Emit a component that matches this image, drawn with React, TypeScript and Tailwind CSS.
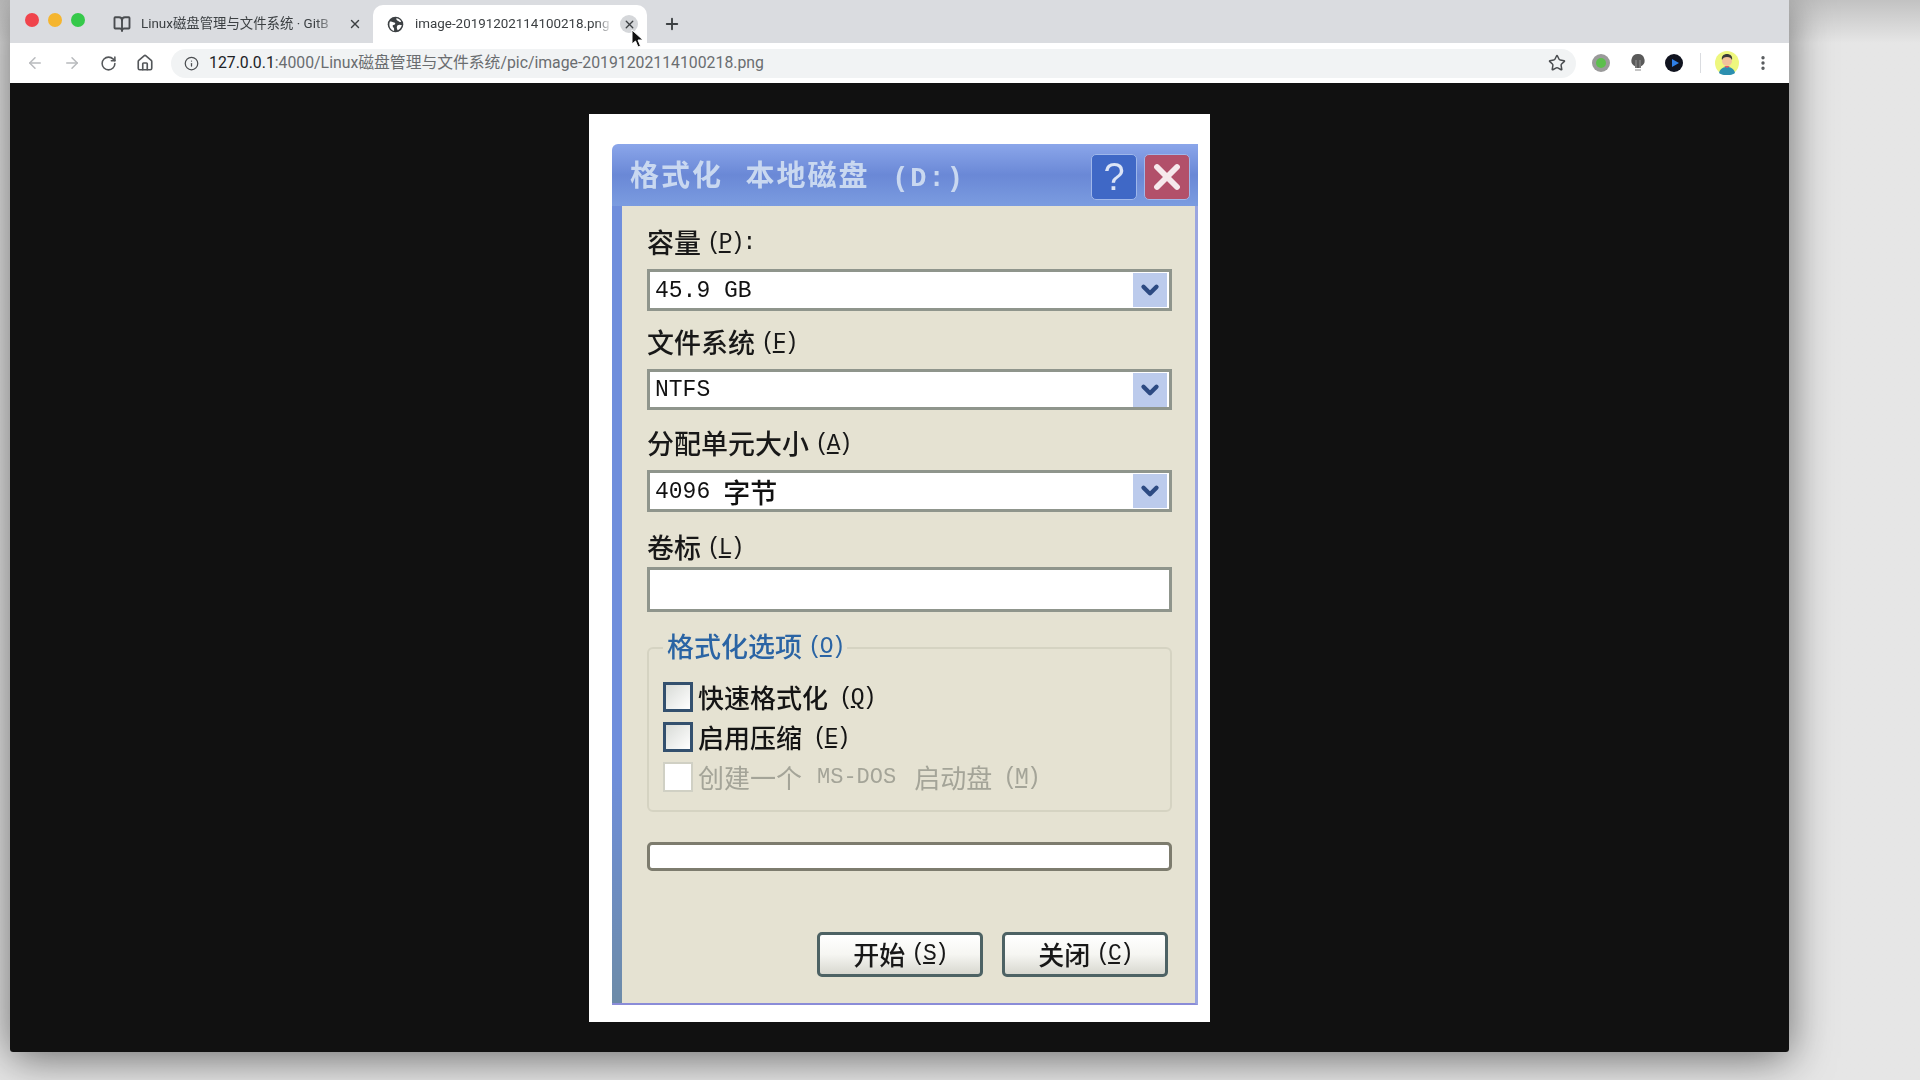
import type { ReactNode } from 'react';
import { ArrowLeft, ArrowRight, BookOpen, ChevronDown, Home, Info, MoreVertical, Plus, RotateCw, Star, X } from 'lucide-react';

const cjk = "font-['Noto_Sans_CJK_SC',sans-serif]";
const mono = "font-['Liberation_Mono','Noto_Sans_CJK_SC',monospace]";

function Hotkey({ k, suffix = '' }: { k: string; suffix?: string }) {
  return (
    <span className={`${mono} ml-[6px] translate-y-[1px] text-[23px] tracking-[-2px]`}>
      (<span className="underline underline-offset-2">{k}</span>){suffix}
    </span>
  );
}

function Combo({ children, height }: { children: ReactNode; height: string }) {
  return (
    <div className={`${height} flex items-center justify-between border-[3px] border-[#8f958c] bg-white pl-[5px] pr-[2px]`}>
      <span className={`${mono} flex translate-y-[1px] items-center gap-[13px] whitespace-pre text-[23px] font-medium leading-none text-[#111]`}>{children}</span>
      <span className="flex h-[34px] w-[34px] items-center justify-center bg-[#bccbec]">
        <ChevronDown size={26} strokeWidth={4} className="text-[#2d4a82]" />
      </span>
    </div>
  );
}

function Check({ children, k, disabled }: { children: ReactNode; k: string; disabled?: boolean }) {
  return (
    <div className={`flex h-[30px] items-center gap-[5px] ${disabled ? 'text-[#a4a498]' : 'font-medium text-[#141414]'}`}>
      <span
        className={
          disabled
            ? 'h-[30px] w-[30px] border-2 border-[#d0d0c4] bg-white'
            : 'h-[30px] w-[30px] border-[3px] border-[#33506e] bg-gradient-to-br from-[#d9dcd8] to-white'
        }
      />
      <span className="flex items-center whitespace-nowrap text-[26px] leading-none">{children}</span>
      <Hotkey k={k} />
    </div>
  );
}

function DialogButton({ label, k }: { label: string; k: string }) {
  return (
    <div className="flex h-[45px] w-[166px] items-center justify-center rounded-[5px] border-[3px] border-[#4d6264] bg-gradient-to-b from-white via-[#f6f6f2] to-[#d8d8d0] pb-[3px] text-[26px] font-medium text-[#181818]">
      {label}
      <Hotkey k={k} />
    </div>
  );
}

function Dialog() {
  return (
    <div className={`${cjk} flex h-[861px] w-[586px] flex-col blur-[0.7px]`}>
      <div className="flex h-[62px] shrink-0 items-center justify-between rounded-tl-[6px] bg-gradient-to-b from-[#8ba6ea] via-[#6a88d6] to-[#7b9ce0] pl-[18px] pr-[8px]">
        <span className="translate-y-[1px] whitespace-nowrap text-[29px] font-bold tracking-[2px] text-[#c9d8f0] [word-spacing:14px]">
          格式化 本地磁盘 <span className={`${mono} text-[27px]`}>(D:)</span>
        </span>
        <div className="flex translate-y-[2px] gap-[7px]">
          <span className="flex h-[46px] w-[46px] items-center justify-center rounded-[5px] border border-[#9fb7ea] bg-[#3f68c6] font-['Liberation_Sans',sans-serif] text-[38px] leading-none text-[#dbe4f6]">
            ?
          </span>
          <span className="flex h-[46px] w-[46px] items-center justify-center rounded-[5px] border border-[#9fb7ea] bg-[#b2506a]">
            <X size={40} strokeWidth={3.5} className="text-[#f6e9ec]" />
          </span>
        </div>
      </div>
      <div className="flex min-h-0 flex-1 border-b-2 border-r-[3px] border-b-[#8a8cd8] border-r-[#9ba6e0] bg-[#e5e2d2]">
        <div className="w-[10px] shrink-0 bg-gradient-to-b from-[#6f8edc] from-70% to-[#6d8ba8]" />
        <div className="flex-1 pl-[25px] pr-[23px] pt-[16px] font-medium text-[#181818]">
          <div className="mb-[7px] flex h-[40px] items-center text-[27px]">容量<Hotkey k="P" suffix=":" /></div>
          <Combo height="h-[42px]">45.9 GB</Combo>
          <div className="mb-[7px] mt-[11px] flex h-[40px] items-center text-[27px]">文件系统<Hotkey k="F" /></div>
          <Combo height="h-[41px]">NTFS</Combo>
          <div className="mb-[7px] mt-[13px] flex h-[40px] items-center text-[27px]">分配单元大小<Hotkey k="A" /></div>
          <Combo height="h-[42px]">
            <span>4096</span>
            <span className={`${cjk} -translate-y-[1px] text-[27px]`}>字节</span>
          </Combo>
          <div className="mt-[15px] flex h-[40px] items-center text-[27px]">卷标<Hotkey k="L" /></div>
          <div className="h-[45px] border-[3px] border-[#8f958c] bg-white" />
          <div className="relative mt-[35px] flex h-[165px] flex-col gap-[10px] rounded-[6px] border-2 border-[#d5d3c2] pl-[14px] pt-[33px] font-normal">
            <div className="absolute -top-[23px] left-[14px] flex h-[40px] items-center bg-[#e5e2d2] px-[4px] text-[27px] font-medium text-[#2a64a4]">
              格式化选项<Hotkey k="O" />
            </div>
            <Check k="Q">快速格式化</Check>
            <Check k="E">启用压缩</Check>
            <Check k="M" disabled>
              创建一个<span className={`${mono} ml-[15px] mr-[18px] translate-y-[1px] text-[22px]`}>MS-DOS</span>启动盘
            </Check>
          </div>
          <div className="mt-[30px] h-[29px] rounded-[5px] border-[3px] border-[#7d7c6e] bg-white" />
          <div className="mt-[61px] flex justify-end gap-[19px] pr-[4px]">
            <DialogButton label="开始" k="S" />
            <DialogButton label="关闭" k="C" />
          </div>
        </div>
      </div>
    </div>
  );
}

function Globe() {
  return (
    <svg width="17" height="17" viewBox="0 0 24 24" className="shrink-0">
      <circle cx="12" cy="12" r="11" fill="#3c4043" />
      <path d="M4 8c3-1 4 1 6 1s2 2 1 3-3 0-3 2 2 2 2 4v3C5 20 2 14 4 8zM13 3c3 0 6 2 7 5-2 1-3 0-4-1s-3-1-3-4zM15 13c2-1 4-1 6 0-1 3-3 6-6 7-1-2-2-5 0-7z" fill="#fff" />
    </svg>
  );
}

function Cursor() {
  return (
    <svg width="14" height="20" viewBox="0 0 14 20" className="absolute left-[621px] top-[29px]">
      <path d="M1 1v14l3.5-3 2.5 6 2.5-1-2.5-6H12z" fill="#111" stroke="#fff" strokeWidth="1" />
    </svg>
  );
}

function Avatar() {
  return (
    <svg width="24" height="24" viewBox="0 0 24 24">
      <circle cx="12" cy="12" r="12" fill="#eef77e" />
      <path d="M4 22c1-5 5-6 8-6s7 1 8 6c-4 3-12 3-16 0z" fill="#2c8fb0" />
      <circle cx="12" cy="10" r="5" fill="#f2c29b" />
      <path d="M7 9c-1-4 2-6 5-6s6 2 5 6c-1-2-2-3-5-3s-4 1-5 3z" fill="#3a3a3a" />
      <path d="M9 15h6l-3 2z" fill="#e0566a" />
    </svg>
  );
}

export default function App() {
  return (
    <div className="h-[1080px] w-[1920px] overflow-hidden bg-gradient-to-b from-[#c2c2c2] to-[#e6e6e6] to-[4%] pl-[10px]">
      <div className="relative flex h-[1052px] w-[1779px] flex-col rounded-b-[3px] shadow-[0_6px_44px_rgba(0,0,0,0.55)]">
        <div className="flex h-[43px] shrink-0 items-end bg-[#dadce0] font-['Roboto','Noto_Sans_CJK_SC',sans-serif] text-[13.4px] text-[#3c4043]">
          <div className="flex h-[43px] w-[92px] shrink-0 items-center gap-[9px] pb-[3px] pl-[15px]">
            <span className="h-[14px] w-[14px] rounded-full bg-[#f0444c]" />
            <span className="h-[14px] w-[14px] rounded-full bg-[#f5b52e]" />
            <span className="h-[14px] w-[14px] rounded-full bg-[#35c94a]" />
          </div>
          <div className="flex h-[38px] w-[271px] shrink-0 items-center pl-[11px]">
            <BookOpen size={18} strokeWidth={2.5} className="shrink-0 text-[#4a4d50]" />
            <span className="ml-[10px] block w-[198px] overflow-hidden whitespace-nowrap [mask-image:linear-gradient(90deg,#000_88%,transparent)]">
              Linux磁盘管理与文件系统 · GitB
            </span>
            <X size={14} strokeWidth={2.5} className="ml-[9px] shrink-0" />
          </div>
          <div className="flex h-[38px] w-[274px] shrink-0 items-center rounded-t-[10px] bg-white pl-[14px]">
            <Globe />
            <span className="ml-[11px] block w-[197px] overflow-hidden whitespace-nowrap [mask-image:linear-gradient(90deg,#000_92%,transparent)]">
              image-20191202114100218.png
            </span>
            <span className="ml-[8px] flex h-[18px] w-[18px] items-center justify-center rounded-full bg-[#d5d7da]">
              <X size={13} strokeWidth={2.5} />
            </span>
          </div>
          <div className="flex h-[38px] items-center pl-[16px]">
            <Plus size={18} strokeWidth={2.5} />
          </div>
        </div>
        <div className="flex h-[40px] shrink-0 items-center bg-white pl-[16px] pr-[16px] font-['Roboto','Noto_Sans_CJK_SC',sans-serif]">
          <div className="flex items-center gap-[19px]">
            <ArrowLeft size={18} className="text-[#b8babd]" />
            <ArrowRight size={18} className="text-[#b8babd]" />
            <RotateCw size={17} strokeWidth={2.2} className="text-[#54575a]" />
            <Home size={18} strokeWidth={2.2} className="text-[#54575a]" />
          </div>
          <div className="ml-[17px] flex h-[29px] w-[1405px] items-center rounded-full bg-[#f1f3f4] pl-[13px] pr-[10px]">
            <Info size={15} strokeWidth={2} className="shrink-0 text-[#4a4d50]" />
            <span className="ml-[10px] whitespace-nowrap text-[15.8px] text-[#6a6d70]">
              <span className="text-[#202124]">127.0.0.1</span>:4000/Linux磁盘管理与文件系统/pic/image-20191202114100218.png
            </span>
            <Star size={18} strokeWidth={2} className="ml-auto text-[#4a4d50]" />
          </div>
          <div className="ml-[16px] flex items-center">
            <span className="flex h-[18px] w-[18px] items-center justify-center rounded-full bg-[#9a9a9a]">
              <span className="h-[10px] w-[10px] rounded-full bg-[#5cbf4c]" />
            </span>
            <svg width="14" height="18" viewBox="0 0 14 18" className="ml-[21px]">
              <path d="M7 0a6.5 6.5 0 0 0-3 12.3V14h6v-1.7A6.5 6.5 0 0 0 7 0z" fill="#5a5a5a" />
              <path d="M5 6v8M9 6v8M4 16h6" stroke="#8a8a8a" strokeWidth="1.2" fill="none" />
            </svg>
            <svg width="18" height="18" viewBox="0 0 18 18" className="ml-[20px]">
              <circle cx="9" cy="9" r="9" fill="#10131f" />
              <path d="M7 5l7 4-7 4z" fill="#2f7fe8" />
            </svg>
            <span className="ml-[17px] h-[20px] w-px bg-[#dadce0]" />
            <span className="ml-[14px] flex"><Avatar /></span>
            <MoreVertical size={18} strokeWidth={2.5} className="ml-[15px] text-[#54575a]" />
          </div>
        </div>
        <div className="flex min-h-0 flex-1 justify-center rounded-b-[3px] bg-[#111111] pt-[31px]">
          <div className="flex h-[908px] w-[621px] bg-white pl-[23px] pt-[30px]">
            <Dialog />
          </div>
        </div>
        <Cursor />
      </div>
    </div>
  );
}
